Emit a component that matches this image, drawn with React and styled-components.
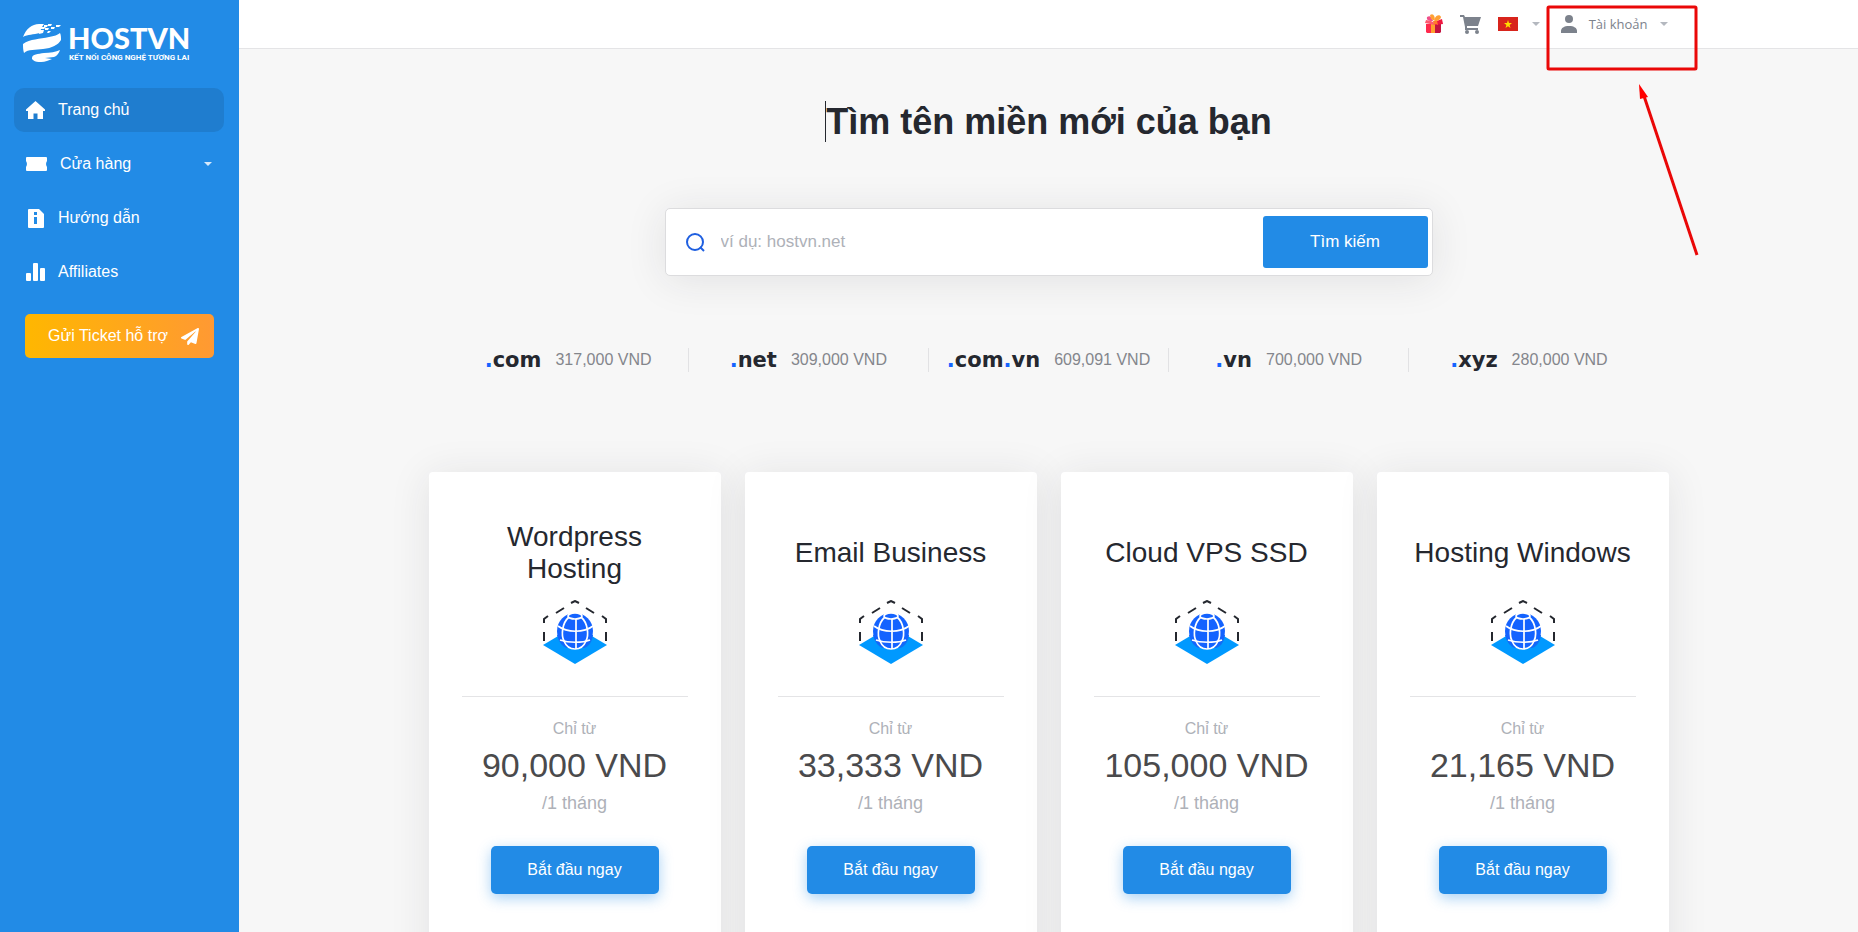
import styled, { createGlobalStyle } from "styled-components";

const navItems = [
    { label: "Trang chủ", icon: <HomeIcon />, active: true },
    { label: "Cửa hàng", icon: <TicketIcon />, caret: true },
    { label: "Hướng dẫn", icon: <InfoIcon /> },
    { label: "Affiliates", icon: <BarsIcon /> },
];

const domains = [
    { parts: [ "com" ], price: "317,000 VND" },
    { parts: [ "net" ], price: "309,000 VND" },
    { parts: [ "com", "vn" ], price: "609,091 VND" },
    { parts: [ "vn" ], price: "700,000 VND" },
    { parts: [ "xyz" ], price: "280,000 VND" },
];

const products = [
    { name: "Wordpress Hosting", price: "90,000 VND" },
    { name: "Email Business", price: "33,333 VND" },
    { name: "Cloud VPS SSD", price: "105,000 VND" },
    { name: "Hosting Windows", price: "21,165 VND" },
];

function App () {
    return (
        <Page>
            <GlobalStyle />
            <Sidebar>
                <Logo href="#">
                    <LogoMark />
                    <LogoText>
                        <Brand>HOSTVN</Brand>
                        <Tagline>KẾT NỐI CÔNG NGHỆ TƯƠNG LAI</Tagline>
                    </LogoText>
                </Logo>
                <Nav>
                    { navItems.map( ( item ) => (
                        <NavLink href="#" key={ item.label } $active={ item.active }>
                            { item.icon }
                            <span>{ item.label }</span>
                            { item.caret && <Caret $color="#d6e9fb" $push /> }
                        </NavLink>
                    ) ) }
                </Nav>
                <TicketButton>
                    Gửi Ticket hỗ trợ
                    <PlaneIcon />
                </TicketButton>
            </Sidebar>
            <Main>
                <TopBar>
                    <TopInner>
                        <IconLink href="#" aria-label="Gift"><GiftIcon /></IconLink>
                        <IconLink href="#" aria-label="Cart"><CartIcon /></IconLink>
                        <LanguageButton aria-label="Tiếng Việt">
                            <FlagIcon />
                            <Caret $color="#b4b8bf" />
                        </LanguageButton>
                        <AccountButton>
                            <UserIcon />
                            Tài khoản
                            <Caret $color="#b4b8bf" />
                            <Callout />
                        </AccountButton>
                    </TopInner>
                </TopBar>
                <Heading>Tìm tên miền mới của bạn</Heading>
                <SearchForm onSubmit={ ( e ) => e.preventDefault() }>
                    <SearchIcon />
                    <SearchInput type="text" placeholder="ví dụ: hostvn.net" aria-label="Tìm tên miền" />
                    <SearchButton>Tìm kiếm</SearchButton>
                </SearchForm>
                <DomainList>
                    { domains.map( ( domain ) => (
                        <Domain key={ domain.parts.join( "." ) }>
                            <Tld>
                                { domain.parts.map( ( part ) => (
                                    <span key={ part }><Dot>.</Dot>{ part }</span>
                                ) ) }
                            </Tld>
                            <DomainPrice>{ domain.price }</DomainPrice>
                        </Domain>
                    ) ) }
                </DomainList>
                <Cards>
                    { products.map( ( product ) => (
                        <Card key={ product.name }>
                            <CardTitle>{ product.name }</CardTitle>
                            <GlobeIcon />
                            <Divider />
                            <From>Chỉ từ</From>
                            <Price>{ product.price }</Price>
                            <Period>/1 tháng</Period>
                            <StartButton>Bắt đầu ngay</StartButton>
                        </Card>
                    ) ) }
                </Cards>
            </Main>
        </Page>
    );
}

function LogoMark () {
    return (
        <svg width="38" height="38" viewBox="0 0 38 38" fill="#fff">
            <path d="M0 13C3 5 9 0 16 0h5l-2 3h4l-2 2h-3l-1 4C10 11 5 10 0 13z" />
            <path d="M21 1h4l-1 2h-3zM25 0h4l-1 2h-3zM33 1h5l-2 2h-3zM22 4h4l-1 2h-3zM28 3h4l-1 2h-3zM17 6h4l-1 3-4 1zM25 7h3l-2 2h-2z" />
            <path d="M0 20c7-5 17-5 26-7 5-1 9-2 11-4 1 2 1 4 1 7-3 5-9 8-18 9-7 1-15 0-19 4-1-3-1-6-1-9z" />
            <path d="M9 34c0-4 6-4 12-5 6 0 12-1 16-3-1 3-3 6-6 7l-9 1 7 1c-6 3-16 5-20 0z" />
        </svg>
    );
}

function HomeIcon () {
    return (
        <svg width="19" height="18" viewBox="0 0 19 18" fill="#fff">
            <path d="M9.500 0L0 8.500V10h2v8h5.500v-5.500h4V18H17v-8h2V8.500z" />
        </svg>
    );
}

function TicketIcon () {
    return (
        <svg width="21" height="14" viewBox="0 0 22 14" fill="#fff" preserveAspectRatio="none">
            <path d="M1 0h20a1 1 0 0 1 1 1v3q-2 3 0 6v3a1 1 0 0 1-1 1H1a1 1 0 0 1-1-1v-3q2-3 0-6V1a1 1 0 0 1 1-1z" />
        </svg>
    );
}

function InfoIcon () {
    return (
        <svg width="19" height="19" viewBox="0 0 19 19">
            <path d="M3 0h10l5 5v13a1 1 0 0 1-1 1H3a1 1 0 0 1-1-1V1a1 1 0 0 1 1-1z" fill="#fff" />
            <path d="M8 3h3v3H8zM8 8h3v7H8z" fill="#228be6" />
        </svg>
    );
}

function BarsIcon () {
    return (
        <svg width="19" height="18" viewBox="0 0 19 18" fill="#fff">
            <rect x="0" y="10" width="5" height="8" rx="1" />
            <rect x="7" y="0" width="5" height="18" rx="1" />
            <rect x="14" y="5" width="5" height="13" rx="1" />
        </svg>
    );
}

function PlaneIcon () {
    return (
        <svg width="18" height="17" viewBox="0 0 512 512" fill="#fff" preserveAspectRatio="none">
            <path d="M476 3.200L12.500 270.600c-18.100 10.400-15.800 35.600 2.200 43.200L121 358.400l287.300-253.200c5.500-4.900 13.300 2.600 8.600 8.300L176 407v80.500c0 23.600 28.500 32.900 42.500 15.800L282 426l124.600 52.200c14.200 6 30.400-2.900 33-18.200l72-432C515 7.800 493.300-6.800 476 3.200z" />
        </svg>
    );
}

function GiftIcon () {
    return (
        <svg width="18" height="20" viewBox="0 0 18 20">
            <path d="M1 10h5v9H2l-1-1z" fill="#ff2a4d" />
            <path d="M6 10h4v9H6z" fill="#ff9f2e" />
            <path d="M10 9h6v9l-1 1h-5z" fill="#c4123f" />
            <path d="M1 6l5 1 4 2v2L0 9z" fill="#ff5a70" />
            <path d="M9 8l8-3 1 5-8 1z" fill="#ef1740" />
            <path d="M2 3c3-2 5 0 6 4C5 7 1 7 2 3z" fill="#f0508a" />
            <path d="M5 1c3-2 5 0 5 6L6 5zM10 4c1-3 5-4 6-1 0 2-2 3-6 5z" fill="#ffa033" />
            <path d="M8 7h4l1 4-2-1-2 1z" fill="#ff7a2b" />
        </svg>
    );
}

function CartIcon () {
    return (
        <svg width="21" height="19" viewBox="0 0 21 19" fill="#7c828c">
            <path d="M0 0h4l1 2h16l-3 9H7l0 2h11v2H5V12L3 2H0z" />
            <circle cx="7" cy="17" r="2" />
            <circle cx="17" cy="17" r="2" />
        </svg>
    );
}

function FlagIcon () {
    return (
        <svg width="20" height="14" viewBox="0 0 20 14">
            <rect width="20" height="14" fill="#d8241c" />
            <path d="M10 3l1 3h3l-2.400 2 .9 3-2.500-1.800L7.500 11l.9-3L6 6h3z" fill="#ffde00" />
        </svg>
    );
}

function UserIcon () {
    return (
        <svg width="16" height="18" viewBox="0 0 16 18" fill="#7c828c">
            <circle cx="8" cy="4" r="4" />
            <path d="M0 18v-2c0-3 3-5 8-5s8 2 8 5v2z" />
        </svg>
    );
}

function SearchIcon () {
    return (
        <svg width="19" height="19" viewBox="0 0 19 19" fill="none" stroke="#1f5fe0" strokeWidth="2">
            <circle cx="9" cy="9" r="8" />
            <path d="M14 14l4 4" />
        </svg>
    );
}

function GlobeIcon () {
    return (
        <svg width="64" height="64" viewBox="0 0 64 64" fill="none">
            <path d="M0 45L32 26l32 19-32 19z" fill="#0099ff" />
            <path d="M28 3l4-2 4 2M13 13l8-5M43 8l8 5M1 23v-4l4-3M59 16l4 3v4M1 32v9M63 32v9" stroke="#25282f" strokeWidth="2" />
            <path d="M14 35c2 8 6 12 10 13h17c4-1 8-5 9-13z" fill="#1170f4" />
            <circle cx="32" cy="31" r="18" fill="#1463ff" />
            <g stroke="#fff" strokeWidth="1.700">
                <path d="M26 17c-7 6-8 18-5 24 2 5 6 8 11 8s9-3 11-8c3-6 2-18-5-24" />
                <path d="M27 18c-3 8-4 22 0 30" strokeWidth="0" />
                <path d="M33 19v30M15 26c9 7 26 7 35 0M17 40c9 3 22 3 30 0" />
                <ellipse cx="32" cy="16" rx="7" ry="3" fill="#1463ff" />
            </g>
        </svg>
    );
}

function Callout () {
    return (
        <CalloutSvg width="156" height="256" viewBox="0 0 156 256" aria-hidden="true">
            <rect x="3" y="7" width="148" height="62" rx="1" fill="none" stroke="#ea0808" strokeWidth="3" />
            <path d="M99 96L152 255" stroke="#ea0808" strokeWidth="3" />
            <path d="M94 84l9 13-8 2z" fill="#f00" />
        </CalloutSvg>
    );
}

const GlobalStyle = createGlobalStyle`
  * {
    box-sizing: border-box;
  }
  body {
    margin: 0;
    background: #f7f7f7;
    color: #25282f;
    font-family: "Liberation Sans", Arial, sans-serif;
    font-size: 16px;
  }
  button, input {
    font: inherit;
    border: 0;
  }
  button {
    cursor: pointer;
  }
  svg {
    flex: none;
  }
`;

const Page = styled.div`
  display: flex;
  height: 100vh;
  overflow: hidden;
`;

const Sidebar = styled.aside`
  flex: none;
  width: 239px;
  padding: 24px 15px 24px 14px;
  background: #228be6;
  color: #fff;
`;

const Logo = styled.a`
  display: flex;
  gap: 7px;
  height: 40px;
  margin: 0 0 24px 9px;
  color: #fff;
  text-decoration: none;
`;

const LogoText = styled.span`
  display: flex;
  flex-direction: column;
  white-space: nowrap;
`;

const Brand = styled.span`
  font: 900 29px/28px Lato, sans-serif;
`;

const Tagline = styled.span`
  padding-left: 1px;
  font: bold 8px/12px Roboto, sans-serif;
`;

const Nav = styled.nav`
  display: flex;
  flex-direction: column;
  gap: 10px;
`;

const NavLink = styled.a`
  display: flex;
  align-items: center;
  gap: 13px;
  height: 44px;
  padding: 0 12px;
  border-radius: 10px;
  background: ${ ( props ) => ( props.$active ? "#1f7dcf" : "transparent" ) };
  color: #fff;
  text-decoration: none;
`;

const Caret = styled.span`
  width: 0;
  height: 0;
  margin-left: ${ ( props ) => ( props.$push ? "auto" : "0" ) };
  border: 4px solid transparent;
  border-top-color: ${ ( props ) => props.$color };
  border-bottom: 0;
`;

const TicketButton = styled.button`
  display: flex;
  align-items: center;
  justify-content: center;
  gap: 13px;
  height: 44px;
  width: 189px;
  margin: 20px 0 0 11px;
  padding: 0 8px 0 16px;
  border-radius: 5px;
  background: linear-gradient(90deg, #ffb700, #ff9933);
  color: #fff;
  white-space: nowrap;
`;

const Main = styled.main`
  flex: 1;
  min-width: 0;
`;

const TopBar = styled.header`
  height: 49px;
  padding: 0 24px;
  background: #fff;
  border-bottom: 1px solid #e4e4e6;
`;

const TopInner = styled.div`
  display: flex;
  align-items: center;
  justify-content: flex-end;
  gap: 17px;
  max-width: 1240px;
  height: 48px;
  margin: 0 auto;
`;

const IconLink = styled.a`
  display: flex;
`;

const LanguageButton = styled.button`
  display: flex;
  align-items: center;
  gap: 14px;
  padding: 0;
  background: none;
`;

const AccountButton = styled.button`
  position: relative;
  display: flex;
  align-items: center;
  gap: 12px;
  margin-left: 4px;
  padding: 0 1px 0 0;
  background: none;
  color: #7c828c;
  font: 13px "Open Sans", sans-serif;
`;

const CalloutSvg = styled.svg`
  position: absolute;
  top: -15px;
  left: -16px;
  z-index: 1;
  pointer-events: none;
`;

const Heading = styled.h1`
  width: fit-content;
  margin: 52px auto 66px;
  border-left: 1px solid #25282f;
  font-size: 36px;
  line-height: 41px;
`;

const SearchForm = styled.form`
  display: flex;
  align-items: center;
  gap: 16px;
  max-width: 768px;
  height: 68px;
  margin: 0 auto;
  padding: 0 4px 0 20px;
  border: 1px solid #dcdcde;
  border-radius: 5px;
  background: #fff;
  box-shadow: 0 4px 40px rgba(37, 40, 47, 0.1);
  font-size: 17px;
`;

const SearchInput = styled.input`
  flex: 1;
  min-width: 0;
  padding: 0;
  outline: 0;
  &::placeholder {
    color: #aeb1b8;
  }
`;

const SearchButton = styled.button`
  width: 165px;
  height: 52px;
  border-radius: 3px;
  background: #228be6;
  color: #fff;
`;

const DomainList = styled.ul`
  display: flex;
  max-width: 1200px;
  margin: 72px auto 100px;
  padding: 0;
  list-style: none;
`;

const Domain = styled.li`
  flex: 1;
  display: flex;
  align-items: center;
  justify-content: center;
  gap: 14px;
  height: 24px;
  white-space: nowrap;
  &:not(:last-child) {
    border-right: 1px solid #e2e2e4;
  }
`;

const Tld = styled.span`
  font: bold 21px/24px "DejaVu Sans", sans-serif;
`;

const Dot = styled.span`
  color: #1463ff;
`;

const DomainPrice = styled.span`
  color: #84868c;
`;

const Cards = styled.section`
  display: flex;
  gap: 24px;
  max-width: 1240px;
  margin: 0 auto;
`;

const Card = styled.article`
  flex: 1;
  display: flex;
  flex-direction: column;
  align-items: center;
  padding: 49px 33px 48px;
  height: 500px;
  border-radius: 4px;
  background: #fff;
  box-shadow: 0 4px 40px rgba(37, 40, 47, 0.1);
  text-align: center;
`;

const CardTitle = styled.h2`
  display: flex;
  align-items: center;
  height: 64px;
  margin: 0 0 15px;
  font-size: 28px;
  font-weight: normal;
  line-height: 32px;
`;

const Divider = styled.hr`
  width: 100%;
  margin: 32px 0 20px;
  border: 0;
  border-top: 1px solid #e4e4e6;
`;

const From = styled.span`
  color: #aeb1b8;
  line-height: 24px;
`;

const Price = styled.strong`
  color: #4a4a4c;
  font-size: 34px;
  font-weight: normal;
  line-height: 48px;
`;

const Period = styled.span`
  color: #aeb1b8;
  font-size: 18px;
  line-height: 28px;
`;

const StartButton = styled.button`
  flex: none;
  width: 168px;
  height: 48px;
  margin-top: 29px;
  border-radius: 5px;
  background: #228be6;
  box-shadow: 0 4px 14px rgba(34, 139, 230, 0.4);
  color: #fff;
`;

export default App;
